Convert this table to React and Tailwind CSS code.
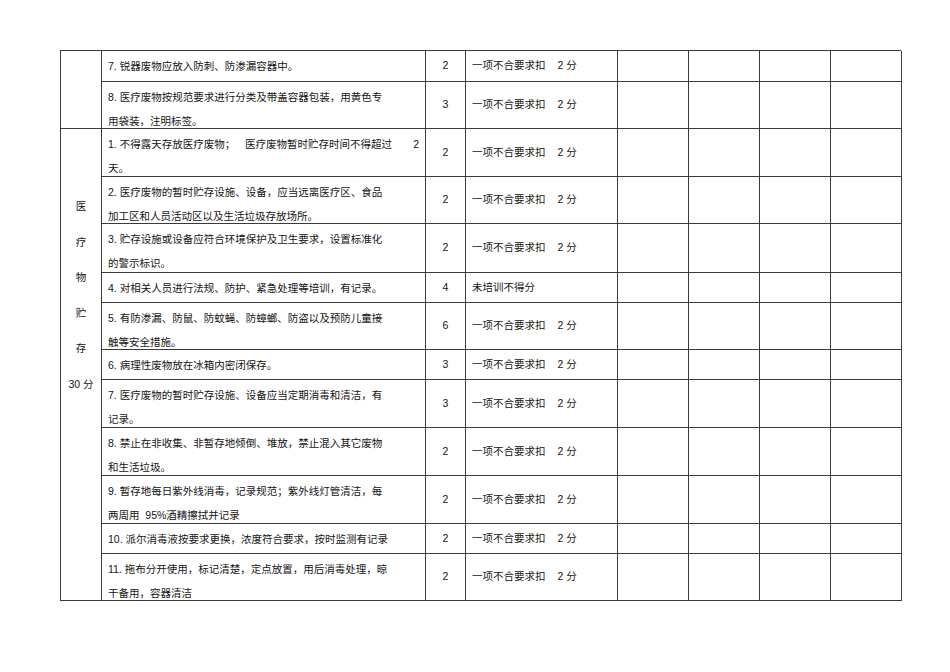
const rowStarts = [
  'row-start-1',
  'row-start-2',
  'row-start-3',
  'row-start-4',
  'row-start-5',
  'row-start-6',
  'row-start-7',
  'row-start-8',
  'row-start-9',
  'row-start-10',
  'row-start-11',
  'row-start-12',
  'row-start-13',
];

const rows = [
  { lines: ['7. 锐器废物应放入防刺、防渗漏容器中。'], score: '2', rule: 'std' },
  { lines: ['8. 医疗废物按规范要求进行分类及带盖容器包装，用黄色专', '用袋装，注明标签。'], score: '3', rule: 'std' },
  { special: true, lines: ['天。'], score: '2', rule: 'std' },
  { lines: ['2. 医疗废物的暂时贮存设施、设备，应当远离医疗区、食品', '加工区和人员活动区以及生活垃圾存放场所。'], score: '2', rule: 'std' },
  { lines: ['3. 贮存设施或设备应符合环境保护及卫生要求，设置标准化', '的警示标识。'], score: '2', rule: 'std' },
  { lines: ['4. 对相关人员进行法规、防护、紧急处理等培训，有记录。'], score: '4', rule: '未培训不得分' },
  { lines: ['5. 有防渗漏、防鼠、防蚊蝇、防蟑螂、防盗以及预防儿童接', '触等安全措施。'], score: '6', rule: 'std' },
  { lines: ['6. 病理性废物放在冰箱内密闭保存。'], score: '3', rule: 'std' },
  { lines: ['7. 医疗废物的暂时贮存设施、设备应当定期消毒和清洁，有', '记录。'], score: '3', rule: 'std' },
  { lines: ['8. 禁止在非收集、非暂存地倾倒、堆放，禁止混入其它废物', '和生活垃圾。'], score: '2', rule: 'std' },
  { lines: ['9. 暂存地每日紫外线消毒，记录规范；紫外线灯管清洁，每', '两周用  95%酒精擦拭并记录'], score: '2', rule: 'std' },
  { lines: ['10. 派尔消毒液按要求更换，浓度符合要求，按时监测有记录'], score: '2', rule: 'std' },
  { lines: ['11. 拖布分开使用，标记清楚，定点放置，用后消毒处理，晾', '干备用，容器清洁'], score: '2', rule: 'std' },
];

const cell = 'border-r border-b border-[#3a3a3a] overflow-visible';

function Rule({ rule }) {
  if (rule !== 'std') return <span>{rule}</span>;
  return (
    <span>
      一项不合要求扣<span className="ml-[12px]">2 分</span>
    </span>
  );
}

export default function App() {
  return (
    <div className="min-h-[672px] w-[950px] bg-white pl-[60px] pt-[50px] font-['Liberation_Sans','Noto_Sans_CJK_SC',sans-serif] text-[10.5px] text-[#141414]">
      <div className="grid w-[841px] grid-cols-[41px_324px_40px_152px_71px_71px_71px_71px] grid-rows-[31px_47px_48px_47px_49px_30px_47px_30px_48px_48px_48px_30px_47px] border-l border-t border-[#3a3a3a]">
        <div className={`${cell} col-start-1 row-start-1 row-span-2`} />
        <div className={`${cell} col-start-1 row-start-3 row-span-11 flex flex-col items-center pt-[60px] leading-[35.5px]`}>
          <span>医</span>
          <span>疗</span>
          <span>物</span>
          <span>贮</span>
          <span>存</span>
          <span>30 分</span>
        </div>

        {rows.map((r, i) => {
          const rs = rowStarts[i];
          return (
            <div key={i} className="contents">
              <div className={`${cell} ${rs} col-start-2 whitespace-pre pl-[6px] pt-[3px] leading-[24px]`}>
                {r.special && (
                  <div className="flex pr-[6px]">
                    <span className="w-[137px]">1. 不得露天存放医疗废物；</span>
                    <span>医疗废物暂时贮存时间不得超过</span>
                    <span className="ml-auto">2</span>
                  </div>
                )}
                {r.lines.map((l, j) => (
                  <div key={j}>{l}</div>
                ))}
              </div>
              <div className={`${cell} ${rs} col-start-3 flex items-center justify-center`}>{r.score}</div>
              <div className={`${cell} ${rs} col-start-4 flex items-center pl-[6px]`}>
                <Rule rule={r.rule} />
              </div>
              <div className={`${cell} ${rs} col-start-5`} />
              <div className={`${cell} ${rs} col-start-6`} />
              <div className={`${cell} ${rs} col-start-7`} />
              <div className={`${cell} ${rs} col-start-8`} />
            </div>
          );
        })}
      </div>
    </div>
  );
}
